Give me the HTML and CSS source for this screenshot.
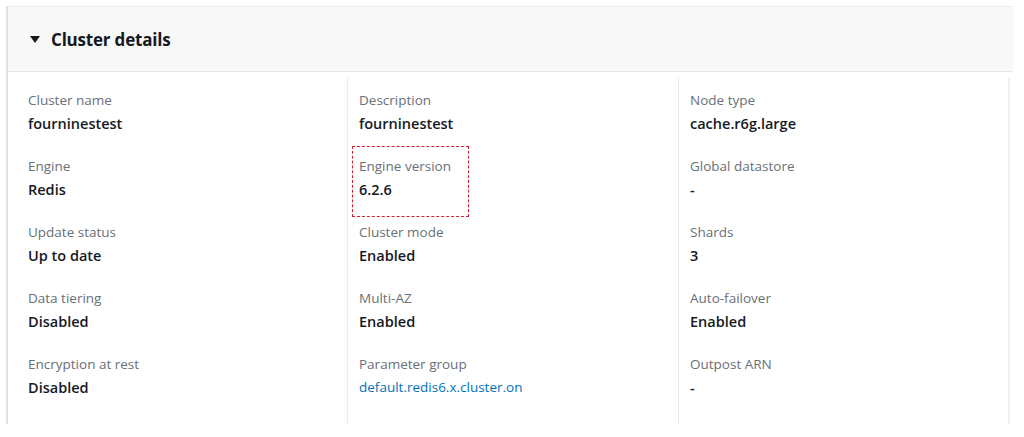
FILE: index.html
```html
<!DOCTYPE html>
<html>
<head>
<meta charset="utf-8">
<link rel="stylesheet" href="styles.css">
</head>
<body>
<div class="card">
  <div class="header">
    <span class="caret"></span>
    <h2 class="title">Cluster details</h2>
  </div>
  <div class="grid">
    <div class="col first">
      <div class="item"><div class="label">Cluster name</div><div class="value">fourninestest</div></div>
      <div class="item"><div class="label">Engine</div><div class="value">Redis</div></div>
      <div class="item"><div class="label">Update status</div><div class="value">Up to date</div></div>
      <div class="item"><div class="label">Data tiering</div><div class="value">Disabled</div></div>
      <div class="item"><div class="label">Encryption at rest</div><div class="value">Disabled</div></div>
    </div>
    <div class="col">
      <div class="item"><div class="label">Description</div><div class="value">fourninestest</div></div>
      <div class="item highlight"><div class="label">Engine version</div><div class="value">6.2.6</div></div>
      <div class="item"><div class="label">Cluster mode</div><div class="value">Enabled</div></div>
      <div class="item"><div class="label">Multi-AZ</div><div class="value">Enabled</div></div>
      <div class="item"><div class="label">Parameter group</div><div class="value link">default.redis6.x.cluster.on</div></div>
    </div>
    <div class="col last">
      <div class="item"><div class="label">Node type</div><div class="value">cache.r6g.large</div></div>
      <div class="item"><div class="label">Global datastore</div><div class="value">-</div></div>
      <div class="item"><div class="label">Shards</div><div class="value">3</div></div>
      <div class="item"><div class="label">Auto-failover</div><div class="value">Enabled</div></div>
      <div class="item"><div class="label">Outpost ARN</div><div class="value">-</div></div>
    </div>
  </div>
</div>
</body>
</html>
```
FILE: styles.css
```css
html, body {
  margin: 0;
  padding: 0;
  background: #ffffff;
}
body {
  font-family: "Open Sans", "Liberation Sans", sans-serif;
  color: #16191f;
  height: 437px;
  overflow: hidden;
}
.card {
  margin: 6px 0 0 6px;
  width: 1005px;
  border-left: 2px solid #dfe1e1;
}
.header {
  background: #f8f8f8;
  border-top: 1px solid #ebeded;
  border-bottom: 1px solid #e6e8e8;
  display: flex;
  align-items: center;
  padding-left: 22px;
  box-sizing: border-box;
  height: 66px;
}
.caret {
  width: 0;
  height: 0;
  border-left: 5px solid transparent;
  border-right: 5px solid transparent;
  border-top: 7px solid #16191f;
  margin-right: 11px;
  margin-top: 1px;
}
.title {
  margin: 0;
  font-size: 17px;
  font-weight: 700;
  letter-spacing: -0.2px;
}
.grid {
  display: grid;
  grid-template-columns: 339px 331px 332px;
  margin-top: 6px;
}
.col {
  border-left: 1px solid #eaeded;
  padding: 12px 0 0 11px;
  height: 346px;
  box-sizing: border-box;
}
.col.first {
  border-left: none;
  padding-left: 20px;
}
.col.last {
  border-right: 2px solid #eef0f0;
}
.item {
  margin-bottom: 21px;
  height: 45px;
  box-sizing: border-box;
}
.label {
  font-size: 13.5px;
  line-height: 20px;
  color: #687078;
}
.value {
  font-size: 14.5px;
  line-height: 27px;
  font-weight: 600;
  color: #16191f;
}
.value.link {
  color: #0073bb;
  font-size: 13.5px;
  font-weight: 500;
}
.highlight {
  outline: 1.5px dashed #d0202f;
  outline-offset: 0;
  margin-left: -6px;
  padding-left: 6px;
  width: 115px;
  box-sizing: border-box;
  height: 69px;
  padding-top: 9px;
  margin-top: -9px;
  margin-bottom: 6px;
}
```
